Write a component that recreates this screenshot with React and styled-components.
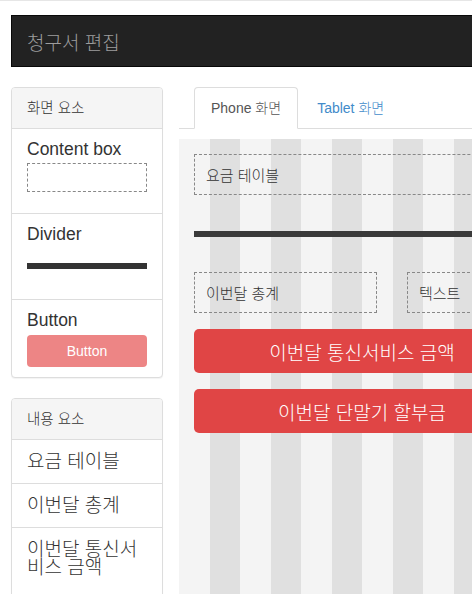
import React from "react";
import styled, { createGlobalStyle } from "styled-components";

const Global = createGlobalStyle`
  html, body {
    margin: 0;
    padding: 0;
    overflow: hidden;
    background: #fff;
  }
  body {
    border-top: 1px solid #e6e6e6;
    font-family: "Liberation Sans", "Noto Sans CJK KR", sans-serif;
    font-weight: 300;
    color: #333;
  }
  * { box-sizing: border-box; }
`;

const Page = styled.div`
  width: 600px;
  padding: 14px 0 0 11px;
`;

const Navbar = styled.div`
  height: 52px;
  background: #222;
  border: 1px solid #080808;
  display: flex;
  align-items: center;
  padding: 0 15px;
  color: #9d9d9d;
  font-size: 19px;
`;

const Layout = styled.div`
  display: flex;
  align-items: stretch;
  gap: 16px;
  margin-top: 20px;
`;

const Sidebar = styled.div`
  width: 152px;
  flex: none;
  display: flex;
  flex-direction: column;
  gap: 20px;
`;

const Panel = styled.div`
  flex: ${(p) => (p.$grow ? 1 : "none")};
  border: 1px solid #ddd;
  border-radius: 4px;
  background: #fff;
  box-shadow: 0 1px 1px rgba(0, 0, 0, 0.05);
`;

const PanelHeading = styled.div`
  background: #f5f5f5;
  border-bottom: 1px solid #ddd;
  border-radius: 3px 3px 0 0;
  padding: 10px 15px;
  font-size: 14.5px;
  line-height: 20px;
  color: #333;
`;

const Section = styled.div`
  padding: 8px 15px ${(p) => p.$pb}px;
  & + & {
    border-top: 1px solid #ddd;
  }
`;

const SectionTitle = styled.div`
  font-size: 17.5px;
  line-height: 24px;
  color: #333;
`;

const DashedSample = styled.div`
  margin-top: 2px;
  height: 29px;
  border: 1px dashed #888;
`;

const BarSample = styled.div`
  margin-top: 17px;
  height: 6px;
  background: #333;
`;

const ButtonSample = styled.div`
  margin-top: 3px;
  height: 32px;
  border-radius: 4px;
  background: #ed8585;
  color: #fff;
  font-size: 14px;
  display: flex;
  align-items: center;
  justify-content: center;
`;

const ListItem = styled.div`
  padding: 13px 15px 12px;
  font-size: 19px;
  line-height: 18px;
  border-top: 1px solid #ddd;
  &:first-of-type {
    border-top: none;
  }
`;

const Main = styled.div`
  width: 366px;
  flex: none;
`;

const Tabs = styled.div`
  display: flex;
  gap: 2px;
  padding-left: 15px;
  border-bottom: 1px solid #ddd;
`;

const Tab = styled.div`
  padding: 10px 16px;
  font-size: 14px;
  line-height: 20px;
  border: 1px solid ${(p) => (p.$active ? "#ddd" : "transparent")};
  border-bottom-color: transparent;
  border-radius: 4px 4px 0 0;
  margin-bottom: -1px;
  background: ${(p) => (p.$active ? "#fff" : "transparent")};
  color: ${(p) => (p.$active ? "#555" : "#428bca")};
`;

const Canvas = styled.div`
  margin-top: 10px;
  padding: 15px;
  min-height: 480px;
  background: repeating-linear-gradient(
    to right,
    #f4f4f4 0,
    #f4f4f4 30.5px,
    #e0e0e0 30.5px,
    #e0e0e0 61px
  );
`;

const Box = styled.div`
  height: 41px;
  border: 1px dashed #888;
  padding: 0 11px;
  display: flex;
  align-items: center;
  font-size: 15px;
  color: #333;
`;

const Divider = styled.div`
  height: 6px;
  background: #3a3a3a;
  margin: 36px 0 35px;
`;

const BoxRow = styled.div`
  display: grid;
  grid-template-columns: 183px 1fr;
  gap: 30px;
`;

const RedButton = styled.div`
  margin-top: 16px;
  height: 44px;
  border-radius: 5px;
  background: #e04545;
  color: #fff;
  font-size: 19px;
  display: flex;
  align-items: center;
  justify-content: center;
`;

export default function App() {
  return (
    <>
      <Global />
      <Page>
        <Navbar>청구서 편집</Navbar>
        <Layout>
          <Sidebar>
            <Panel>
              <PanelHeading>화면 요소</PanelHeading>
              <Section $pb={21}>
                <SectionTitle>Content box</SectionTitle>
                <DashedSample />
              </Section>
              <Section $pb={30}>
                <SectionTitle>Divider</SectionTitle>
                <BarSample />
              </Section>
              <Section $pb={10}>
                <SectionTitle>Button</SectionTitle>
                <ButtonSample>Button</ButtonSample>
              </Section>
            </Panel>
            <Panel $grow>
              <PanelHeading>내용 요소</PanelHeading>
              <div>
                <ListItem>요금 테이블</ListItem>
                <ListItem>이번달 총계</ListItem>
                <ListItem>이번달 통신서비스 금액</ListItem>
              </div>
            </Panel>
          </Sidebar>
          <Main>
            <Tabs>
              <Tab $active>Phone 화면</Tab>
              <Tab>Tablet 화면</Tab>
            </Tabs>
            <Canvas>
              <Box>요금 테이블</Box>
              <Divider />
              <BoxRow>
                <Box>이번달 총계</Box>
                <Box>텍스트</Box>
              </BoxRow>
              <RedButton>이번달 통신서비스 금액</RedButton>
              <RedButton>이번달 단말기 할부금</RedButton>
            </Canvas>
          </Main>
        </Layout>
      </Page>
    </>
  );
}
